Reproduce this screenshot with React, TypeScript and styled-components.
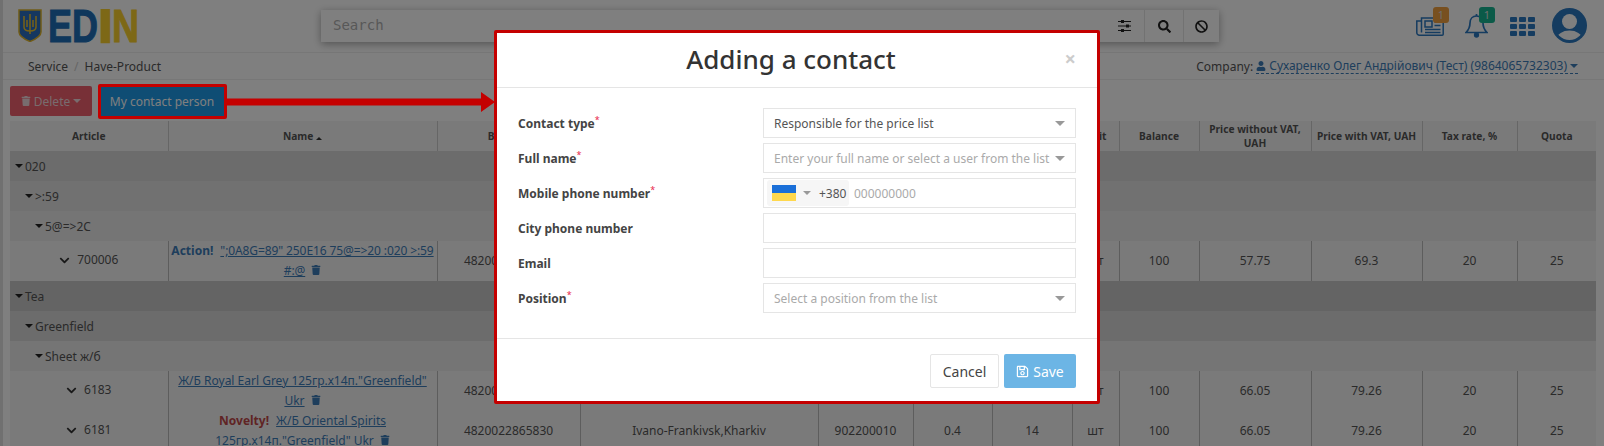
import React from "react";
import styled, { createGlobalStyle } from "styled-components";
import { FaTrash, FaRegSave, FaUser, FaSearch, FaBan, FaChevronDown } from "react-icons/fa";

const Global = createGlobalStyle`
  html, body { margin: 0; padding: 0; background: #fff; }
  body { font-family: "Noto Sans", "Open Sans", sans-serif; font-size: 12px; color: #555; }
  * { box-sizing: border-box; }
`;

const Page = styled.div`
  position: relative; height: 100vh; overflow: hidden; border-left: 3px solid #e0e0e0;
`;
const TopBar = styled.header`
  height: 53px; display: flex; align-items: flex-start; padding: 9px 0 0 15px;
  border-bottom: 1px solid #eee;
`;
const LogoBox = styled.div` width: 303px; display: flex; gap: 6px; flex: none; `;
const SearchBar = styled.div`
  width: 898px; height: 32px; margin-top: 1px; display: flex; background: #fff; flex: none;
  box-shadow: 0 2px 8px rgba(0,0,0,.35);
`;
const SearchText = styled.div`
  flex: 1; padding-left: 12px; font: 14px/30px "DejaVu Sans Mono", monospace; color: #b0b0b0;
`;
const SearchBtn = styled.div<{ $w: number; $plain?: boolean }>`
  width: ${p => p.$w}px; display: flex; align-items: center; justify-content: center;
  border-left: ${p => (p.$plain ? "0" : "1px solid #e4e4e4")}; color: #222; font-size: 13px;
`;
const Tools = styled.div` display: flex; flex: 1; height: 40px; `;
const ToolIcon = styled.div<{ $ml: number; $mt: number; $w: number; $h: number }>`
  position: relative; flex: none; margin-left: ${p => p.$ml}px; margin-top: ${p => p.$mt}px;
  width: ${p => p.$w}px; height: ${p => p.$h}px; line-height: 0; color: #2a78c0;
`;
const Badge = styled.span<{ $bg: string; $top: number; $right: number }>`
  position: absolute; width: 16px; height: 16px; border-radius: 3px; background: ${p => p.$bg};
  top: ${p => p.$top}px; right: ${p => p.$right}px; color: #ddd; font-size: 11px; line-height: 16px; text-align: center;
`;
const Crumbs = styled.div`
  height: 27px; display: flex; align-items: center; justify-content: space-between;
  padding: 0 26px 0 25px; border-bottom: 1px solid #eee; color: #555;
`;
const CrumbPath = styled.div` display: flex; gap: 6px; `;
const Sep = styled.span` color: #ccc; `;
const Company = styled.div` display: flex; align-items: center; gap: 3px; font-size: 12px; `;
const CompanyLink = styled.span`
  display: inline-flex; align-items: center; gap: 3px; color: #3d7cb8; border-bottom: 1px dashed #3d7cb8;
  line-height: 15px; font-size: 12px;
`;
const Caret = styled.i<{ $c?: string; $s?: number; $up?: boolean }>`
  display: inline-block; width: 0; height: 0; flex: none;
  border-left: ${p => p.$s ?? 4}px solid transparent; border-right: ${p => p.$s ?? 4}px solid transparent;
  ${p => (p.$up ? "border-bottom" : "border-top")}: ${p => p.$s ?? 4}px solid ${p => p.$c ?? "currentColor"};
`;
const Toolbar = styled.div` height: 41px; display: flex; padding: 6px 0 0 7px; gap: 8px; `;
const DeleteBtn = styled.div`
  width: 82px; height: 30px; display: flex; align-items: center; justify-content: center; gap: 3px;
  background: #f0606e; color: #f0d8dc; border-radius: 2px;
`;
const ContactBtn = styled.div`
  width: 124px; height: 30px; display: flex; align-items: center; justify-content: center;
  background: #1e9ae8; color: #fff;
`;
const Table = styled.table`
  margin-left: 7px; width: 1586px; table-layout: fixed; border-collapse: collapse; font-size: 12px; color: #555;
`;
const Th = styled.th`
  height: 30px; padding: 0 1px; background: #f5f5f5; font-size: 10.2px; line-height: 14px; color: #555;
  border-left: 1px solid #ccc; &:first-child { border-left: 0; }
`;
const GroupRow = styled.tr<{ $bg: string }>` background: ${p => p.$bg}; height: 30px; `;
const GroupCell = styled.td` padding: 0; height: 30px; color: #555; font-size: 12px; `;
const GroupInner = styled.div<{ $lvl: number }>`
  display: flex; align-items: center; gap: 2px; height: 29px; padding-left: ${p => 5 + p.$lvl * 10}px;
`;
const Td = styled.td`
  height: 40px; padding: 0; text-align: center; background: #f5f5f5; line-height: 20px; font-size: 12px;
  border-left: 1px solid #bbb; &:first-child { border-left: 0; }
`;
const ArticleInner = styled.span` display: inline-flex; align-items: center; gap: 7px; font-size: 12px; `;
const NameLink = styled.a<{ $tight?: boolean }>`
  color: #3d7cb8; text-decoration: underline; letter-spacing: ${p => (p.$tight ? "-0.1px" : "0")};
`;
const Tag = styled.b<{ $c: string }>` color: ${p => p.$c}; margin-right: 7px; `;
const Trash = styled.span` color: #3d7cb8; font-size: 10px; margin-left: 6px; `;

const Backdrop = styled.div` position: fixed; inset: 0; background: rgba(0,0,0,.5); `;
const Highlight = styled.div`
  position: absolute; left: 95px; top: 84px; width: 129px; height: 35px; border: 3px solid #c40000; border-radius: 2px;
`;
const ArrowSvg = styled.svg` position: absolute; left: 223px; top: 90px; `;
const Modal = styled.div`
  position: absolute; left: 491px; top: 30px; width: 606px; height: 374px; background: #fff;
  border: 3px solid #c40000; display: flex; flex-direction: column; border-radius: 2px;
`;
const ModalHead = styled.div`
  height: 55px; flex: none; position: relative; border-bottom: 1px solid #e5e5e5; text-align: center;
  padding-right: 12px; font-size: 26px; line-height: 52px; font-weight: 500; color: #333;
`;
const Close = styled.span`
  position: absolute; right: 21px; top: 0; font-size: 20px; line-height: 52px; font-weight: 700; color: #ccc;
`;
const ModalBody = styled.div`
  padding: 20px 21px 25px; display: flex; flex-direction: column; gap: 5px; border-bottom: 1px solid #e5e5e5; flex: none;
`;
const FormRow = styled.div` display: grid; grid-template-columns: 245px 313px; align-items: center; height: 30px; `;
const Label = styled.label` font-weight: 700; color: #444; `;
const Star = styled.sup` color: #e8254a; font-size: 9px; line-height: 0; font-weight: 400; `;
const Field = styled.div<{ $ph?: boolean }>`
  height: 30px; border: 1px solid #e5e5e5; display: flex; align-items: center; justify-content: space-between;
  padding: 0 10px; color: ${p => (p.$ph ? "#aaa" : "#555")}; white-space: nowrap;
`;
const PhoneField = styled.div`
  height: 30px; border: 1px solid #e5e5e5; display: flex; align-items: center; padding: 0 3px; gap: 5px; color: #aaa;
`;
const FlagBtn = styled.div`
  width: 82px; height: 26px; background: #f6f6f6; border-radius: 3px; display: flex; align-items: center;
  padding-left: 5px; color: #555; flex: none;
`;
const Flag = styled.span`
  width: 24px; height: 16px; flex: none; background: linear-gradient(#1a6fd8 50%, #ffd84d 50%);
  margin-right: 7px;
`;
const Phone = styled.span` margin-left: 8px; `;
const ModalFoot = styled.div` display: flex; justify-content: flex-end; gap: 5px; padding: 15px 21px 0; `;
const Cancel = styled.div`
  width: 69px; height: 34px; border: 1px solid #e5e5e5; border-radius: 2px; font-size: 14px; color: #444;
  display: flex; align-items: center; justify-content: center;
`;
const Save = styled.div`
  width: 72px; height: 34px; border-radius: 2px; background: #6cb5e5; color: #fff; font-size: 14px;
  display: flex; align-items: center; justify-content: center; gap: 4px;
`;

const widths = [158, 269, 143, 238, 95, 79, 80, 47, 80, 112, 111, 95, 79];
const heads = ["Article", "Name", "Barcode", "Warehouse", "Code", "Weight", "Multiplicity", "Unit", "Balance", "Price without VAT, UAH", "Price with VAT, UAH", "Tax rate, %", "Quota"];

const Logo = () => (
  <>
    <svg width="24" height="33" viewBox="0 0 24 33">
      <path d="M1 1h22v22q0 5-11 9.5Q1 28 1 23z" fill="#2a6fc0" stroke="#e0b62c" strokeWidth="1.5" />
      <path d="M12 5v20M6 7v11q0 4 6 4t6-4V7M9 11v7M15 11v7" fill="none" stroke="#f0c52c" strokeWidth="1.5" />
    </svg>
    <svg width="92" height="44" viewBox="0 0 92 44">
      <text x="0" y="33" fontFamily="Liberation Sans" fontWeight="700" fontSize="46" fill="#1f6fb8" stroke="#1f6fb8" strokeWidth="1" textLength="50" lengthAdjust="spacingAndGlyphs">ED</text>
      <text x="51" y="33" fontFamily="Liberation Sans" fontWeight="700" fontSize="46" fill="#fbd12c" stroke="#fbd12c" strokeWidth="2.5" textLength="13" lengthAdjust="spacingAndGlyphs">I</text>
      <text x="64" y="33" fontFamily="Liberation Sans" fontWeight="700" fontSize="46" fill="#fbd12c" stroke="#fbd12c" strokeWidth="1" textLength="27" lengthAdjust="spacingAndGlyphs">N</text>
    </svg>
  </>
);

const SlidersIcon = () => (
  <svg width="13" height="12" viewBox="0 0 13 12" fill="currentColor">
    <rect x="0" y="1" width="13" height="1" />
    <rect x="0" y="5.500" width="13" height="1" />
    <rect x="0" y="10" width="13" height="1" />
    <rect x="3" y="0" width="3" height="3" />
    <rect x="8" y="4.500" width="3" height="3" />
    <rect x="3" y="9" width="3" height="3" />
  </svg>
);
const NewsIcon = () => (
  <svg width="28" height="19" viewBox="0 0 28 19" fill="none" stroke="currentColor" strokeWidth="1.5">
    <path d="M5.5 15.5V1h21.7v16.2a1 1 0 0 1-1 1H3.5a2.5 2.5 0 0 1-2.7-2.5V4h4.7" />
    <rect x="9" y="4" width="7" height="6" />
    <path d="M18.5 5h6M18.5 8.5h6M9 12.5h15.5M9 15.5h15.5" />
  </svg>
);
const BellIcon = () => (
  <svg width="23" height="25" viewBox="0 0 23 25" fill="none" stroke="currentColor" strokeWidth="1.7">
    <path d="M11.5 3C7.5 3 5 6 5 10c0 4.5-1 6.5-4 9.5h21c-3-3-4-5-4-9.5 0-4-2.500-7-6.500-7z" />
    <path d="M11.500 3V1" />
    <circle cx="11.500" cy="22" r="1.800" fill="currentColor" />
  </svg>
);
const GridIcon = () => (
  <svg width="25" height="19" viewBox="0 0 25 19" fill="currentColor">
    {[0, 7, 14].map(y => [0, 9, 18].map(x => (
      <rect key={`${x}-${y}`} x={x} y={y} width="7" height="5" rx="1" />
    )))}
  </svg>
);
const AvatarIcon = () => (
  <svg width="35" height="35" viewBox="0 0 35 35">
    <defs><clipPath id="inner"><circle cx="17.500" cy="17.500" r="14.500" /></clipPath></defs>
    <circle cx="17.500" cy="17.500" r="17.500" fill="currentColor" />
    <circle cx="17.500" cy="13.500" r="7.500" fill="#fff" />
    <ellipse cx="17.500" cy="31" rx="12.500" ry="8.500" fill="#fff" clipPath="url(#inner)" />
  </svg>
);

type Row = { art: string; tag?: [string, string]; name: React.ReactNode; tight?: boolean; code: string; wh: string; c: string; w: string; m: string; p1: string; p2: string };

const DataRow = ({ r }: { r: Row }) => (
  <tr>
    <Td><ArticleInner><FaChevronDown size={11} color="#333" />{r.art}</ArticleInner></Td>
    <Td>
      {r.tag && <Tag $c={r.tag[1]}>{r.tag[0]}</Tag>}
      <NameLink $tight={r.tight}>{r.name}</NameLink>
      <Trash><FaTrash /></Trash>
    </Td>
    <Td>{r.code}</Td><Td>{r.wh}</Td><Td>{r.c}</Td><Td>{r.w}</Td><Td>{r.m}</Td><Td>шт</Td>
    <Td>100</Td><Td>{r.p1}</Td><Td>{r.p2}</Td><Td>20</Td><Td>25</Td>
  </tr>
);

const Group = ({ lvl, bg, text }: { lvl: number; bg: string; text: string }) => (
  <GroupRow $bg={bg}>
    <GroupCell colSpan={13}>
      <GroupInner $lvl={lvl}><Caret $c="#222" />{text}</GroupInner>
    </GroupCell>
  </GroupRow>
);

export default function App() {
  return (
    <>
      <Global />
      <Page>
        <TopBar>
          <LogoBox><Logo /></LogoBox>
          <SearchBar>
            <SearchText>Search</SearchText>
            <SearchBtn $w={39} $plain><SlidersIcon /></SearchBtn>
            <SearchBtn $w={39}><FaSearch /></SearchBtn>
            <SearchBtn $w={36}><FaBan /></SearchBtn>
          </SearchBar>
          <Tools>
            <ToolIcon $ml={197} $mt={8} $w={28} $h={19}>
              <NewsIcon />
              <Badge $bg="#f0a040" $top={-10} $right={-5}>1</Badge>
            </ToolIcon>
            <ToolIcon $ml={21} $mt={4} $w={23} $h={25}>
              <BellIcon />
              <Badge $bg="#16b590" $top={-6} $right={-7}>1</Badge>
            </ToolIcon>
            <ToolIcon $ml={22} $mt={8} $w={25} $h={19}><GridIcon /></ToolIcon>
            <ToolIcon $ml={17} $mt={-1} $w={35} $h={35}><AvatarIcon /></ToolIcon>
          </Tools>
        </TopBar>
        <Crumbs>
          <CrumbPath><span>Service</span><Sep>/</Sep><span>Have-Product</span></CrumbPath>
          <Company>Company:
            <CompanyLink><FaUser size={10} /> Сухаренко Олег Андрійович (Тест) (9864065732303) <Caret /></CompanyLink>
          </Company>
        </Crumbs>
        <Toolbar>
          <DeleteBtn><FaTrash size={10} /> Delete <Caret /></DeleteBtn>
          <ContactBtn>My contact person</ContactBtn>
        </Toolbar>
        <Table>
          <colgroup>{widths.map((w, i) => <col key={i} width={w} />)}</colgroup>
          <thead>
            <tr>
              {heads.map(h => (
                <Th key={h}>{h}{h === "Name" && <> <Caret $up $s={3} $c="#333" /></>}</Th>
              ))}
            </tr>
          </thead>
          <tbody>
            <Group lvl={0} bg="#d8d8d8" text="020" />
            <Group lvl={1} bg="#e2e2e2" text=">:59" />
            <Group lvl={2} bg="#eaeaea" text="5@=>2C" />
            <DataRow r={{ art: "700006", tag: ["Action!", "#3d7cb8"], tight: true, name: <>";0A8G=89" 250E16 75@=&gt;20 :020 &gt;:59<br />#:@</>, code: "4820022865700", wh: "Ivano-Frankivsk,Kharkiv", c: "902200006", w: "0.4", m: "14", p1: "57.75", p2: "69.3" }} />
            <Group lvl={0} bg="#c8c8c8" text="Tea" />
            <Group lvl={1} bg="#d8d8d8" text="Greenfield" />
            <Group lvl={2} bg="#eaeaea" text="Sheet ж/б" />
            <DataRow r={{ art: "6183", name: <>Ж/Б Royal Earl Grey 125гр.х14п."Greenfield" Ukr</>, code: "4820022865823", wh: "Ivano-Frankivsk,Kharkiv", c: "902200011", w: "0.4", m: "14", p1: "66.05", p2: "79.26" }} />
            <DataRow r={{ art: "6181", tag: ["Novelty!", "#c04848"], name: <>Ж/Б Oriental Spirits 125гр.х14п."Greenfield" Ukr</>, code: "4820022865830", wh: "Ivano-Frankivsk,Kharkiv", c: "902200010", w: "0.4", m: "14", p1: "66.05", p2: "79.26" }} />
          </tbody>
        </Table>
        <Backdrop />
        <Highlight />
        <ArrowSvg width="270" height="24" viewBox="0 0 270 24">
          <path d="M0 8.500h255V2l14 10-14 10v-6.500H0z" fill="#c40000" />
        </ArrowSvg>
        <Modal>
          <ModalHead>Adding a contact<Close>×</Close></ModalHead>
          <ModalBody>
            <FormRow><Label>Contact type<Star>*</Star></Label><Field>Responsible for the price list<Caret $c="#999" $s={5} /></Field></FormRow>
            <FormRow><Label>Full name<Star>*</Star></Label><Field $ph>Enter your full name or select a user from the list<Caret $c="#999" $s={5} /></Field></FormRow>
            <FormRow><Label>Mobile phone number<Star>*</Star></Label>
              <PhoneField>
                <FlagBtn><Flag /><Caret $c="#999" $s={4} /><Phone>+380</Phone></FlagBtn>
                000000000
              </PhoneField>
            </FormRow>
            <FormRow><Label>City phone number</Label><Field /></FormRow>
            <FormRow><Label>Email</Label><Field /></FormRow>
            <FormRow><Label>Position<Star>*</Star></Label><Field $ph>Select a position from the list<Caret $c="#999" $s={5} /></Field></FormRow>
          </ModalBody>
          <ModalFoot>
            <Cancel>Cancel</Cancel>
            <Save><FaRegSave size={13} />Save</Save>
          </ModalFoot>
        </Modal>
      </Page>
    </>
  );
}
